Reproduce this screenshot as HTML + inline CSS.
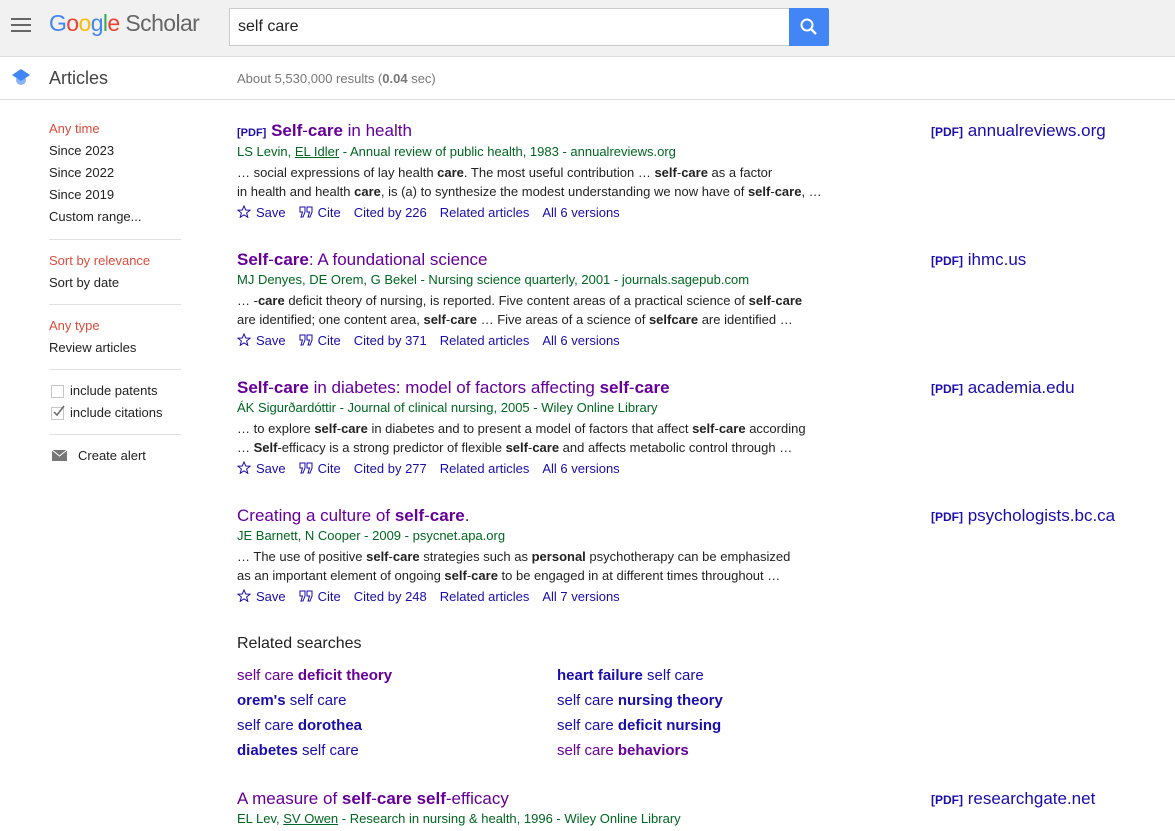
<!DOCTYPE html>
<html><head><meta charset="utf-8"><style>
*{margin:0;padding:0;box-sizing:border-box}
body{width:1175px;height:831px;overflow:hidden;font-family:"Liberation Sans",Arial,sans-serif;background:#fff;position:relative;color:#222}
.a{position:absolute;white-space:nowrap}
#hdr{position:absolute;left:0;top:0;width:1175px;height:57px;background:#f1f1f1;border-bottom:1px solid #ddd}
#sub{position:absolute;left:0;top:57px;width:1175px;height:43px;border-bottom:1px solid #ddd}
.side{font-size:13px;color:#222}
.red{color:#dd4b39}
.hr{position:absolute;left:49px;width:132px;height:1px;background:#e0e0e0}
.t{font-size:17px;color:#660099}
.pdf{font-size:11px;font-weight:bold;color:#1a0dab}
.au{font-size:13px;color:#006621}
.sn{font-size:13px;color:#222}
.ac{font-size:13px;color:#1a0dab}
.ac span{margin-right:13px}
.ac svg{vertical-align:-1px;margin-right:5px}
.rt{font-size:17px;color:#1a0dab}
.rt .pdf{font-size:12px}
.rs{font-size:15px;color:#1a0dab}
.rs.v{color:#660099}
</style></head><body>
<div id="hdr"></div>
<div id="sub"></div>
<div class="a" style="left:11px;top:18px;width:20px">
<div style="height:2px;background:#666;margin-bottom:4px"></div><div style="height:2px;background:#666;margin-bottom:4px"></div><div style="height:2px;background:#666"></div></div>
<div class="a" style="left:49px;top:10px;font-size:23px;letter-spacing:-0.6px"><span style="color:#4285f4">G</span><span style="color:#ea4335">o</span><span style="color:#fbbc05">o</span><span style="color:#4285f4">g</span><span style="color:#34a853">l</span><span style="color:#ea4335">e</span> <span style="color:#666">Scholar</span></div>
<div class="a" style="left:229px;top:8px;width:561px;height:38px;background:#fff;border:1px solid #ccc;border-right:none"></div>
<div class="a" style="left:238px;top:18px;font-size:16px;color:#222">self care</div>
<div class="a" style="left:789px;top:8px;width:40px;height:38px;background:#4285f4;border-radius:0 2px 2px 0">
<svg width="40" height="38" viewBox="0 0 40 38"><circle cx="18" cy="17" r="5.5" stroke="#fff" stroke-width="2" fill="none"/><line x1="22" y1="21" x2="27" y2="26" stroke="#fff" stroke-width="2.4"/></svg></div>
<svg class="a" style="left:10px;top:68px" width="22" height="20" viewBox="0 0 22 20"><circle cx="11" cy="12" r="5" fill="#8ab4f8"/><polygon points="11,1 20,7 11,13 2,7" fill="#4285f4"/></svg>
<div class="a" style="left:49px;top:68px;font-size:18px;color:#444">Articles</div>
<div class="a" style="left:237px;top:71px;font-size:13px;color:#777">About 5,530,000 results (<b>0.04</b> sec)</div>

<div class="a side red" style="left:49px;top:121px">Any time</div>
<div class="a side" style="left:49px;top:143px">Since 2023</div>
<div class="a side" style="left:49px;top:165px">Since 2022</div>
<div class="a side" style="left:49px;top:187px">Since 2019</div>
<div class="a side" style="left:49px;top:209px">Custom range...</div>
<div class="hr" style="top:239px"></div>
<div class="a side red" style="left:49px;top:253px">Sort by relevance</div>
<div class="a side" style="left:49px;top:275px">Sort by date</div>
<div class="hr" style="top:304px"></div>
<div class="a side red" style="left:49px;top:318px">Any type</div>
<div class="a side" style="left:49px;top:340px">Review articles</div>
<div class="hr" style="top:369px"></div>
<div class="a" style="left:51px;top:385px;width:13px;height:13px;border:1px solid #c6c6c6;background:#fff"></div>
<div class="a side" style="left:70px;top:383px">include patents</div>
<div class="a" style="left:51px;top:407px;width:13px;height:13px;border:1px solid #c6c6c6;background:#fff"></div>
<svg class="a" style="left:52px;top:403px" width="14" height="16"><path d="M2 9 L5 12 L12 3" stroke="#666" stroke-width="1.5" fill="none"/></svg>
<div class="a side" style="left:70px;top:405px">include citations</div>
<div class="hr" style="top:434px"></div>
<svg class="a" style="left:52px;top:450px" width="15" height="11"><rect width="15" height="11" fill="#777"/><path d="M0 0 L7.5 6 L15 0" stroke="#fff" stroke-width="1" fill="none"/></svg>
<div class="a side" style="left:78px;top:448px">Create alert</div>

<!-- result 1 -->
<div class="a t" style="left:237px;top:121px"><span class="pdf">[PDF]</span> <b>Self</b>-<b>care</b> in health</div>
<div class="a au" style="left:237px;top:144px">LS Levin, <u>EL Idler</u> - Annual review of public health, 1983 - annualreviews.org</div>
<div class="a sn" style="left:237px;top:165px">… social expressions of lay health <b>care</b>. The most useful contribution … <b>self</b>-<b>care</b> as a factor</div>
<div class="a sn" style="left:237px;top:184px">in health and health <b>care</b>, is (a) to synthesize the modest understanding we now have of <b>self</b>-<b>care</b>, …</div>
<div class="a ac" style="left:237px;top:205px"><span><svg width="14" height="13" viewBox="0 0 14 13"><path d="M7 1 L8.7 5 L13 5.2 L9.6 8 L10.8 12.3 L7 9.8 L3.2 12.3 L4.4 8 L1 5.2 L5.3 5Z" fill="none" stroke="#1a0dab" stroke-width="1"/></svg>Save</span><span><svg width="14" height="12" viewBox="0 0 14 12"><path d="M1 1H6V6L4 11H2L3.5 6H1Z M8 1H13V6L11 11H9L10.5 6H8Z" fill="none" stroke="#1a0dab" stroke-width="1"/></svg>Cite</span><span>Cited by 226</span><span>Related articles</span><span>All 6 versions</span></div>
<div class="a rt" style="left:931px;top:121px"><span class="pdf">[PDF]</span> annualreviews.org</div>

<!-- result 2 -->
<div class="a t" style="left:237px;top:250px"><b>Self</b>-<b>care</b>: A foundational science</div>
<div class="a au" style="left:237px;top:272px">MJ Denyes, DE Orem, G Bekel - Nursing science quarterly, 2001 - journals.sagepub.com</div>
<div class="a sn" style="left:237px;top:293px">… -<b>care</b> deficit theory of nursing, is reported. Five content areas of a practical science of <b>self</b>-<b>care</b></div>
<div class="a sn" style="left:237px;top:312px">are identified; one content area, <b>self</b>-<b>care</b> … Five areas of a science of <b>selfcare</b> are identified …</div>
<div class="a ac" style="left:237px;top:333px"><span><svg width="14" height="13" viewBox="0 0 14 13"><path d="M7 1 L8.7 5 L13 5.2 L9.6 8 L10.8 12.3 L7 9.8 L3.2 12.3 L4.4 8 L1 5.2 L5.3 5Z" fill="none" stroke="#1a0dab" stroke-width="1"/></svg>Save</span><span><svg width="14" height="12" viewBox="0 0 14 12"><path d="M1 1H6V6L4 11H2L3.5 6H1Z M8 1H13V6L11 11H9L10.5 6H8Z" fill="none" stroke="#1a0dab" stroke-width="1"/></svg>Cite</span><span>Cited by 371</span><span>Related articles</span><span>All 6 versions</span></div>
<div class="a rt" style="left:931px;top:250px"><span class="pdf">[PDF]</span> ihmc.us</div>

<!-- result 3 -->
<div class="a t" style="left:237px;top:378px"><b>Self</b>-<b>care</b> in diabetes: model of factors affecting <b>self</b>-<b>care</b></div>
<div class="a au" style="left:237px;top:400px">ÁK Sigurðardóttir - Journal of clinical nursing, 2005 - Wiley Online Library</div>
<div class="a sn" style="left:237px;top:421px">… to explore <b>self</b>-<b>care</b> in diabetes and to present a model of factors that affect <b>self</b>-<b>care</b> according</div>
<div class="a sn" style="left:237px;top:440px">… <b>Self</b>-efficacy is a strong predictor of flexible <b>self</b>-<b>care</b> and affects metabolic control through …</div>
<div class="a ac" style="left:237px;top:461px"><span><svg width="14" height="13" viewBox="0 0 14 13"><path d="M7 1 L8.7 5 L13 5.2 L9.6 8 L10.8 12.3 L7 9.8 L3.2 12.3 L4.4 8 L1 5.2 L5.3 5Z" fill="none" stroke="#1a0dab" stroke-width="1"/></svg>Save</span><span><svg width="14" height="12" viewBox="0 0 14 12"><path d="M1 1H6V6L4 11H2L3.5 6H1Z M8 1H13V6L11 11H9L10.5 6H8Z" fill="none" stroke="#1a0dab" stroke-width="1"/></svg>Cite</span><span>Cited by 277</span><span>Related articles</span><span>All 6 versions</span></div>
<div class="a rt" style="left:931px;top:378px"><span class="pdf">[PDF]</span> academia.edu</div>

<!-- result 4 -->
<div class="a t" style="left:237px;top:506px">Creating a culture of <b>self</b>-<b>care</b>.</div>
<div class="a au" style="left:237px;top:528px">JE Barnett, N Cooper - 2009 - psycnet.apa.org</div>
<div class="a sn" style="left:237px;top:549px">… The use of positive <b>self</b>-<b>care</b> strategies such as <b>personal</b> psychotherapy can be emphasized</div>
<div class="a sn" style="left:237px;top:568px">as an important element of ongoing <b>self</b>-<b>care</b> to be engaged in at different times throughout …</div>
<div class="a ac" style="left:237px;top:589px"><span><svg width="14" height="13" viewBox="0 0 14 13"><path d="M7 1 L8.7 5 L13 5.2 L9.6 8 L10.8 12.3 L7 9.8 L3.2 12.3 L4.4 8 L1 5.2 L5.3 5Z" fill="none" stroke="#1a0dab" stroke-width="1"/></svg>Save</span><span><svg width="14" height="12" viewBox="0 0 14 12"><path d="M1 1H6V6L4 11H2L3.5 6H1Z M8 1H13V6L11 11H9L10.5 6H8Z" fill="none" stroke="#1a0dab" stroke-width="1"/></svg>Cite</span><span>Cited by 248</span><span>Related articles</span><span>All 7 versions</span></div>
<div class="a rt" style="left:931px;top:506px"><span class="pdf">[PDF]</span> psychologists.bc.ca</div>

<div class="a" style="left:237px;top:635px;font-size:16px;color:#222">Related searches</div>
<div class="a rs v" style="left:237px;top:667px">self care <b>deficit theory</b></div>
<div class="a rs" style="left:237px;top:692px"><b>orem's</b> self care</div>
<div class="a rs" style="left:237px;top:717px">self care <b>dorothea</b></div>
<div class="a rs" style="left:237px;top:742px"><b>diabetes</b> self care</div>
<div class="a rs" style="left:557px;top:667px"><b>heart failure</b> self care</div>
<div class="a rs" style="left:557px;top:692px">self care <b>nursing theory</b></div>
<div class="a rs" style="left:557px;top:717px">self care <b>deficit nursing</b></div>
<div class="a rs v" style="left:557px;top:742px">self care <b>behaviors</b></div>

<div class="a t" style="left:237px;top:789px">A measure of <b>self</b>-<b>care</b> <b>self</b>-efficacy</div>
<div class="a au" style="left:237px;top:811px">EL Lev, <u>SV Owen</u> - Research in nursing &amp; health, 1996 - Wiley Online Library</div>
<div class="a rt" style="left:931px;top:789px"><span class="pdf">[PDF]</span> researchgate.net</div>
</body></html>
